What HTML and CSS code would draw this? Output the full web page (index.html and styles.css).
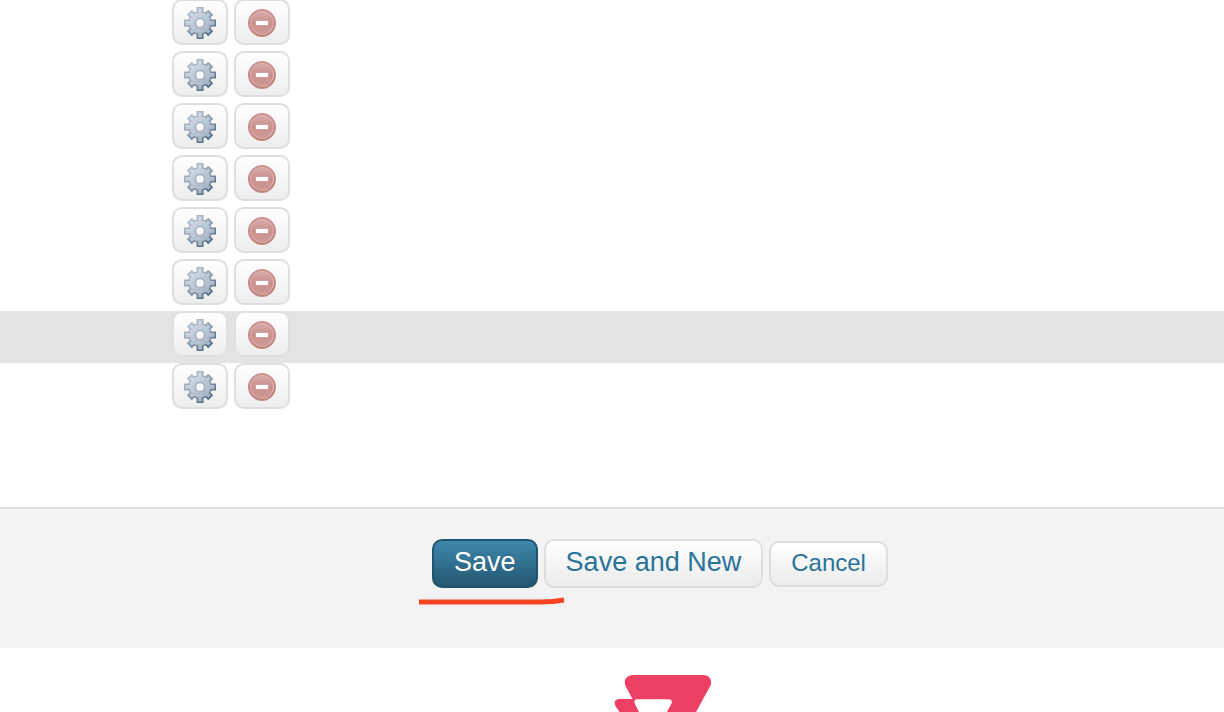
FILE: index.html
```html
<!DOCTYPE html>
<html lang="en">
<head>
<meta charset="utf-8">
<title>Edit fields</title>
<link rel="stylesheet" href="styles.css">
</head>
<body>
<svg class="sprite" aria-hidden="true">
  <defs>
    <linearGradient id="gear-edge" gradientUnits="userSpaceOnUse" x1="6" y1="3" x2="27" y2="30">
      <stop offset="0" stop-color="#b4bfcd"/><stop offset=".5" stop-color="#8797aa"/><stop offset="1" stop-color="#4c6079"/>
    </linearGradient>
    <linearGradient id="gear-face" gradientUnits="userSpaceOnUse" x1="6" y1="3" x2="26" y2="29">
      <stop offset="0" stop-color="#d6dee7"/><stop offset=".6" stop-color="#b5c2d1"/><stop offset="1" stop-color="#9caec2"/>
    </linearGradient>
    <linearGradient id="stop-edge" x1="0" y1="0" x2="0" y2="1">
      <stop offset="0" stop-color="#cd9695"/><stop offset="1" stop-color="#b97371"/>
    </linearGradient>
    <linearGradient id="stop-face" x1="0" y1="0" x2="0" y2="1">
      <stop offset="0" stop-color="#d9aaa8"/><stop offset=".5" stop-color="#c88f8d"/><stop offset="1" stop-color="#cf9997"/>
    </linearGradient>
    <symbol id="gear" viewBox="0 0 32 32">
      <g fill="url(#gear-edge)" stroke="url(#gear-edge)">
        <path stroke-width="7" d="M16 0V32M0 16.01H32M5.300 5.300L26.700 26.700M26.700 5.300L5.300 26.700"/>
        <circle cx="16" cy="16" r="11.400"/>
      </g>
      <g fill="url(#gear-face)" stroke="url(#gear-face)">
        <path stroke-width="3.800" d="M16 1.500V30.500M1.500 16.01H30.500M6.500 6.500L25.500 25.500M25.500 6.500L6.500 25.500"/>
        <circle cx="16" cy="16" r="10.200"/>
      </g>
      <circle cx="16" cy="16" r="4.600" fill="#fafafa" stroke="#a5b3c3" stroke-width="1.800"/>
    </symbol>
    <symbol id="remove" viewBox="0 0 32 32">
      <circle cx="16" cy="16" r="13.600" fill="url(#stop-edge)" stroke="#c98d8b"/>
      <circle cx="16" cy="16" r="11.400" fill="url(#stop-face)" stroke="#dbb0ae" stroke-width="1.200"/>
      <path fill="#c08482" d="M9.500 13.500h13v5.500H9.500z"/>
      <path fill="#fff" d="M9.800 13.800h12.400v4.400H9.800z"/>
    </symbol>
  </defs>
</svg>

<main>
  <ul class="rows">
    <li class="row"><button class="icon-button" type="button" aria-label="Settings"><svg><use href="#gear"/></svg></button><button class="icon-button" type="button" aria-label="Remove"><svg><use href="#remove"/></svg></button></li>
    <li class="row"><button class="icon-button" type="button" aria-label="Settings"><svg><use href="#gear"/></svg></button><button class="icon-button" type="button" aria-label="Remove"><svg><use href="#remove"/></svg></button></li>
    <li class="row"><button class="icon-button" type="button" aria-label="Settings"><svg><use href="#gear"/></svg></button><button class="icon-button" type="button" aria-label="Remove"><svg><use href="#remove"/></svg></button></li>
    <li class="row"><button class="icon-button" type="button" aria-label="Settings"><svg><use href="#gear"/></svg></button><button class="icon-button" type="button" aria-label="Remove"><svg><use href="#remove"/></svg></button></li>
    <li class="row"><button class="icon-button" type="button" aria-label="Settings"><svg><use href="#gear"/></svg></button><button class="icon-button" type="button" aria-label="Remove"><svg><use href="#remove"/></svg></button></li>
    <li class="row"><button class="icon-button" type="button" aria-label="Settings"><svg><use href="#gear"/></svg></button><button class="icon-button" type="button" aria-label="Remove"><svg><use href="#remove"/></svg></button></li>
    <li class="row row-active"><button class="icon-button" type="button" aria-label="Settings"><svg><use href="#gear"/></svg></button><button class="icon-button" type="button" aria-label="Remove"><svg><use href="#remove"/></svg></button></li>
    <li class="row"><button class="icon-button" type="button" aria-label="Settings"><svg><use href="#gear"/></svg></button><button class="icon-button" type="button" aria-label="Remove"><svg><use href="#remove"/></svg></button></li>
  </ul>

  <div class="actions">
    <div class="action-group">
      <button class="button button-primary" type="submit">Save</button>
      <button class="button" type="submit">Save and New</button>
      <button class="button button-small" type="button">Cancel</button>
      <svg class="underline" viewBox="0 0 146 10" aria-hidden="true"><path d="M0 6H122Q134 6 145 4" fill="none" stroke="#fb4322" stroke-width="5"/></svg>
    </div>
  </div>
</main>

<footer class="footer">
  <svg class="logo" viewBox="0 0 98 38" role="img" aria-label="Logo">
    <path fill="#ed3e64" d="M18 1H90Q98 2 97 10.500L82 38H5.500L1.200 31.500Q-1 26 5 25H18.500L11.500 12Q8.500 3 18 1Z"/>
    <path fill="#fff" d="M23 25.200H55Q59 26 57.500 29.500L53 38H25L21 30Q19 26 23 25.200Z"/>
  </svg>
</footer>
</body>
</html>
```
FILE: styles.css
```css
* {
  box-sizing: border-box;
}

body {
  margin: 0;
  background: #fff;
  font-family: "Liberation Sans", Arial, sans-serif;
}

.sprite {
  position: absolute;
  width: 0;
  height: 0;
}

.rows {
  margin: -1px 0 92px;
  padding: 0;
  list-style: none;
}

.row {
  display: flex;
  gap: 6px;
  padding: 0 172px 6px;
}

.row-active {
  background: #e3e3e3;
}

.icon-button {
  padding: 6px 10px 4px;
  border: 2px solid #dedede;
  border-radius: 10px;
  background: linear-gradient(#fff, #ededed);
}

.row-active .icon-button {
  border-color: #e0e0e0;
}

.icon-button svg {
  display: block;
  width: 32px;
  height: 32px;
}

.actions {
  display: flex;
  justify-content: center;
  padding: 30px 0 60px 96px;
  border-top: 2px solid #dcdcdc;
  background: #f3f3f3;
}

.action-group {
  position: relative;
  display: flex;
  align-items: baseline;
  gap: 6px;
}

.button {
  padding: 6px 20px 9px;
  border: 2px solid #dedede;
  border-radius: 10px;
  background: linear-gradient(#fff, #ebebeb);
  color: #2a7399;
  font-family: inherit;
  font-size: 27px;
  line-height: 30px;
}

.button-primary {
  border-color: #21556f;
  background: linear-gradient(#3e87ac, #235870);
  color: #fff;
}

.button-small {
  padding: 6px 20px 8px;
  font-size: 24px;
  line-height: 28px;
}

.underline {
  position: absolute;
  top: 57px;
  left: -13px;
  width: 146px;
  height: 10px;
}

.footer {
  padding: 26px 0 0 102px;
}

.logo {
  display: block;
  width: 98px;
  height: 38px;
  margin: 0 auto;
}
```
